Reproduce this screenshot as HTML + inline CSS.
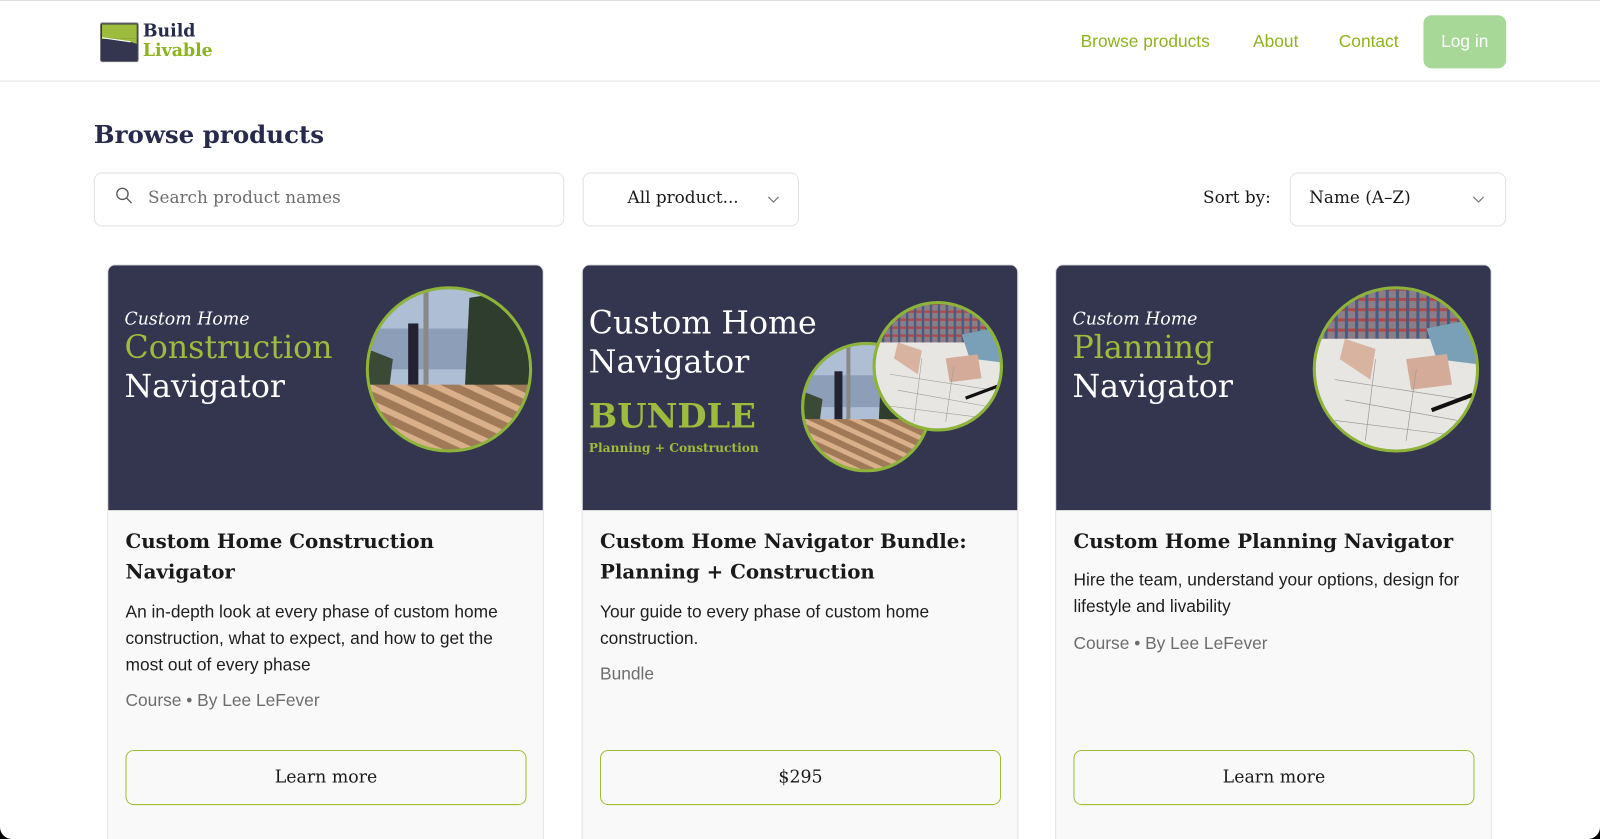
<!DOCTYPE html>
<html><head><meta charset="utf-8"><style>
*{box-sizing:border-box;margin:0;padding:0}
body{width:1600px;height:839px;overflow:hidden;background:#000;font-family:"Liberation Sans",Arial,sans-serif;position:relative}
.page{position:absolute;left:0;top:0;width:1600px;height:839px;background:#fff;border-radius:0 0 12px 12px;overflow:hidden;border-top:1px solid #ddd}
.wrap{position:absolute;left:0;top:0;width:1568px;height:823px;transform:scale(1.0204);transform-origin:0 0}
.serif{font-family:"DejaVu Serif","Liberation Serif",serif}
.hdr{position:absolute;left:0;top:0;width:1568px;height:79px;border-bottom:1px solid #e2e2e2}
.nav{position:absolute;top:30px;font-size:17px;color:#8db31f}
.login{position:absolute;left:1395px;top:14px;width:81px;height:52px;background:#a8d898;border-radius:8px;color:#fff;font-size:17px;text-align:center;line-height:52px}
h1{position:absolute;left:92px;top:116px;font-size:24px;color:#272a4c;font-weight:bold}
.box{position:absolute;border:1px solid #e2e2e2;border-radius:8px;background:#fff;top:168px;height:53px}
.card{position:absolute;top:258px;width:428px;height:600px;background:#f9f9f9;border:1px solid #e4e4e4;border-radius:8px;overflow:hidden}
.img{position:absolute;left:0;top:0;width:426px;height:240px;background:#343650}
.t{position:absolute;left:17px;font-size:19.4px;font-weight:bold;color:#1a1a1a;line-height:30px;width:400px}
.d{position:absolute;left:17px;font-size:17px;color:#1e1e1e;line-height:26px;width:400px}
.m{position:absolute;left:17px;font-size:17px;color:#6d6d6d}
.btn{position:absolute;left:17px;top:475px;width:393px;height:54px;border:1.5px solid #9fbd3a;border-radius:8px;text-align:center;line-height:52px;font-size:17px;color:#1a1a1a}
</style></head><body><div class="page"><div class="wrap">
<div class="hdr">
<svg style="position:absolute;left:98px;top:21px" width="38" height="39" viewBox="0 0 38 39"><rect x="0.5" y="0.5" width="37" height="38" rx="2" fill="#343650" stroke="#777" /><rect x="2" y="2" width="34" height="14" fill="#9dbb3c"/><path d="M2 16 L36 16 L36 21 L30 19 L20 18 L2 15Z" fill="#9dbb3c"/><path d="M2 15 L30 19" stroke="#fff" stroke-width="1"/></svg>
<div class="serif" style="position:absolute;left:140px;top:20px;font-size:17px;font-weight:bold;color:#272a4c;line-height:20px">Build</div>
<div class="serif" style="position:absolute;left:140px;top:39px;font-size:17px;font-weight:bold;color:#8db31f;line-height:20px">Livable</div>
<div class="nav" style="left:1059px">Browse products</div>
<div class="nav" style="left:1228px">About</div>
<div class="nav" style="left:1312px">Contact</div>
<div class="login">Log in</div>
</div>
<h1 class="serif">Browse products</h1>
<div class="box" style="left:92px;width:461px"><svg style="position:absolute;left:19px;top:12px" width="20" height="20" viewBox="0 0 20 20"><circle cx="8" cy="8" r="5.5" fill="none" stroke="#555" stroke-width="1.3"/><path d="M12 12 L17 17" stroke="#555" stroke-width="1.3"/></svg><span class="serif" style="position:absolute;left:52px;top:14px;font-size:16.5px;color:#6e6e6e">Search product names</span></div>
<div class="box" style="left:571px;width:212px"><span class="serif" style="position:absolute;left:43px;top:14px;font-size:16.5px;color:#1a1a1a">All product...</span><svg style="position:absolute;left:180px;top:22px" width="12" height="8"><path d="M1 1 L6 6 L11 1" fill="none" stroke="#777" stroke-width="1.2"/></svg></div>
<span class="serif" style="position:absolute;left:1179px;top:183px;font-size:16.5px;color:#1a1a1a">Sort by:</span>
<div class="box" style="left:1264px;width:212px"><span class="serif" style="position:absolute;left:18px;top:14px;font-size:16.5px;color:#1a1a1a">Name (A–Z)</span><svg style="position:absolute;left:178px;top:22px" width="12" height="8"><path d="M1 1 L6 6 L11 1" fill="none" stroke="#777" stroke-width="1.2"/></svg></div>

<svg width="0" height="0" style="position:absolute"><defs>
<pattern id="beams" width="14" height="14" patternUnits="userSpaceOnUse" patternTransform="rotate(25)"><rect width="14" height="14" fill="#a07a58"/><rect width="14" height="6" fill="#d9b08a"/></pattern>
<pattern id="plaid" width="10" height="10" patternUnits="userSpaceOnUse"><rect width="10" height="10" fill="#8a7f88"/><rect width="10" height="3" fill="#b04a4a"/><rect width="3" height="10" fill="#4a5a80"/></pattern>
<symbol id="cons" viewBox="0 0 160 160"><rect width="160" height="160" fill="#aebed4"/><rect y="40" width="160" height="40" fill="#8d9fb8"/><path d="M100 10 L160 0 L160 110 L95 110 Z" fill="#2f3d2e"/><path d="M0 60 L25 70 L20 110 L0 110Z" fill="#3a4a36"/><rect x="55" y="0" width="5" height="100" fill="#888"/><rect x="40" y="35" width="10" height="60" fill="#223"/><rect y="95" width="160" height="65" fill="url(#beams)"/></symbol>
<symbol id="plan" viewBox="0 0 160 160"><rect width="160" height="160" fill="#e8e6e2"/><rect width="160" height="50" fill="url(#plaid)"/><path d="M110 40 L160 30 L160 75 L120 70Z" fill="#7aa0b8"/><path d="M30 50 L60 60 L55 90 L25 70Z" fill="#d8b3a0"/><path d="M90 70 L130 65 L135 95 L95 100Z" fill="#d4ab98"/><g stroke="#9a9a9a" stroke-width="0.7" fill="none"><path d="M20 90 L150 110 M30 110 L140 130 M60 70 L50 150 M100 80 L90 150 M20 130 L140 145"/></g><path d="M115 120 L155 105" stroke="#111" stroke-width="4"/></symbol>
<clipPath id="cc"><circle cx="80" cy="80" r="80"/></clipPath>
</defs></svg>

<div class="card" style="left:105px">
<div class="img">
<div class="serif" style="position:absolute;left:16px;top:43px;font-size:17px;font-style:italic;color:#fff">Custom Home</div>
<div class="serif" style="position:absolute;left:16px;top:63px;font-size:31px;color:#9dbb3c">Construction</div>
<div class="serif" style="position:absolute;left:16px;top:101px;font-size:31px;color:#fff">Navigator</div>
<svg style="position:absolute;left:252px;top:20px" width="164" height="164" viewBox="-2 -2 164 164"><g clip-path="url(#cc)"><use href="#cons" width="160" height="160"/></g><circle cx="80" cy="80" r="80" fill="none" stroke="#8db33a" stroke-width="3"/></svg>
</div>
<div class="t serif" style="top:256px">Custom Home Construction Navigator</div>
<div class="d" style="top:327px">An in-depth look at every phase of custom home construction, what to expect, and how to get the most out of every phase</div>
<div class="m" style="top:417px">Course • By Lee LeFever</div>
<div class="btn serif">Learn more</div>
</div>

<div class="card" style="left:570px">
<div class="img">
<div class="serif" style="position:absolute;left:6px;top:38px;font-size:31px;color:#fff;line-height:38px">Custom Home<br>Navigator</div>
<div class="serif" style="position:absolute;left:6px;top:128px;font-size:33px;font-weight:bold;color:#9dbb3c">BUNDLE</div>
<div class="serif" style="position:absolute;left:6px;top:172px;font-size:12px;font-weight:bold;color:#9dbb3c">Planning + Construction</div>
<svg style="position:absolute;left:214px;top:75px" width="128" height="128" viewBox="-2 -2 164 164"><g clip-path="url(#cc)"><use href="#cons" width="160" height="160"/></g><circle cx="80" cy="80" r="80" fill="none" stroke="#8db33a" stroke-width="4"/></svg>
<svg style="position:absolute;left:284px;top:35px" width="128" height="128" viewBox="-2 -2 164 164"><g clip-path="url(#cc)"><use href="#plan" width="160" height="160"/></g><circle cx="80" cy="80" r="80" fill="none" stroke="#8db33a" stroke-width="4"/></svg>
</div>
<div class="t serif" style="top:256px">Custom Home Navigator Bundle: Planning + Construction</div>
<div class="d" style="top:327px">Your guide to every phase of custom home construction.</div>
<div class="m" style="top:391px">Bundle</div>
<div class="btn serif">$295</div>
</div>

<div class="card" style="left:1034px">
<div class="img">
<div class="serif" style="position:absolute;left:16px;top:43px;font-size:17px;font-style:italic;color:#fff">Custom Home</div>
<div class="serif" style="position:absolute;left:16px;top:63px;font-size:31px;color:#9dbb3c">Planning</div>
<div class="serif" style="position:absolute;left:16px;top:101px;font-size:31px;color:#fff">Navigator</div>
<svg style="position:absolute;left:251px;top:20px" width="164" height="164" viewBox="-2 -2 164 164"><g clip-path="url(#cc)"><use href="#plan" width="160" height="160"/></g><circle cx="80" cy="80" r="80" fill="none" stroke="#8db33a" stroke-width="3"/></svg>
</div>
<div class="t serif" style="top:256px">Custom Home Planning Navigator</div>
<div class="d" style="top:296px">Hire the team, understand your options, design for lifestyle and livability</div>
<div class="m" style="top:361px">Course • By Lee LeFever</div>
<div class="btn serif">Learn more</div>
</div>
</div></div></body></html>
